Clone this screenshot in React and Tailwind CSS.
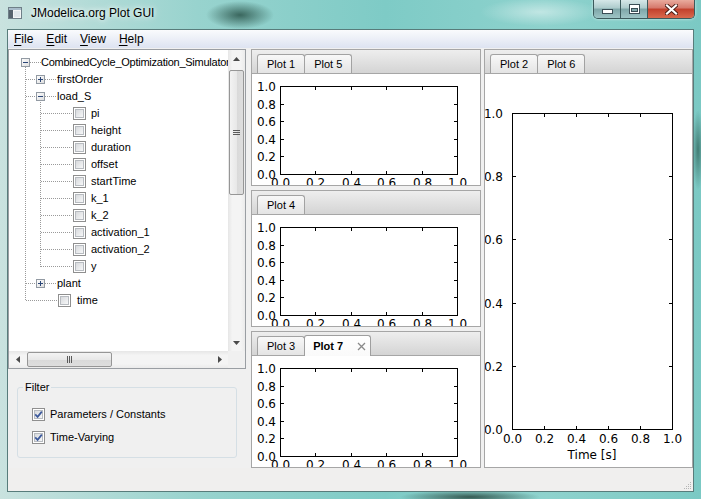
import React from "react";

// ---- Data ----
const treeRows = [
  { label: "CombinedCycle_Optimization_Simulator", kind: "root" },
  { label: "firstOrder", kind: "branch" },
  { label: "load_S", kind: "branch", open: true },
  { label: "pi", kind: "leaf" },
  { label: "height", kind: "leaf" },
  { label: "duration", kind: "leaf" },
  { label: "offset", kind: "leaf" },
  { label: "startTime", kind: "leaf" },
  { label: "k_1", kind: "leaf" },
  { label: "k_2", kind: "leaf" },
  { label: "activation_1", kind: "leaf" },
  { label: "activation_2", kind: "leaf" },
  { label: "y", kind: "leaf" },
  { label: "plant", kind: "branch" },
  { label: "time", kind: "top" },
];

const menus = [
  { key: "F", rest: "ile" },
  { key: "E", rest: "dit" },
  { key: "V", rest: "iew" },
  { key: "H", rest: "elp" },
];

const ticks = [0, 0.2, 0.4, 0.6, 0.8, 1];

// row centre inside the tree viewport
const cy = (i) => 12.5 + 17 * i;

/**
 * Title bar with app icon and caption buttons
 */
function TitleBar() {
  return (
    <div className="flex h-[29px] items-start shrink-0">
      <div className="flex h-[25px] items-center pl-[8px] gap-[9px]">
        <svg width="14" height="12" viewBox="0 0 14 12">
          <rect x="0.5" y="0.5" width="13" height="11" fill="#f2f4f5" stroke="#6f7f88" />
          <rect x="1" y="1" width="12" height="2" fill="#a9bccb" />
          <rect x="1" y="3" width="4" height="8" fill="#56636d" />
          <rect x="6" y="4" width="6" height="6" fill="#dfe6ea" />
        </svg>
        <span className="text-[12px] text-black [text-shadow:0_0_8px_rgba(255,255,255,0.95),0_0_4px_rgba(255,255,255,0.9)]">
          JModelica.org Plot GUI
        </span>
      </div>
      <div className="flex-1" />
      <div className="flex h-[19px] mr-[6px] rounded-b-[5px] border border-t-0 border-[#3c5a5c] overflow-hidden shadow-[0_0_3px_rgba(255,255,255,0.7)]">
        <div className="w-[27px] flex items-center justify-center border-r border-[#3c5a5c] bg-[linear-gradient(#d6e7e8,#adcbcc_45%,#7ea6a8_50%,#9ec4c5)]">
          <svg width="11" height="5" viewBox="0 0 11 5" className="mt-[4px]">
            <rect x="0.5" y="0.5" width="10" height="4" fill="#fff" stroke="#3a4d55" />
          </svg>
        </div>
        <div className="w-[27px] flex items-center justify-center border-r border-[#3c5a5c] bg-[linear-gradient(#d6e7e8,#adcbcc_45%,#7ea6a8_50%,#9ec4c5)]">
          <svg width="11" height="10" viewBox="0 0 11 10">
            <rect x="0.5" y="0.5" width="10" height="9" fill="none" stroke="#3a4d55" />
            <rect x="1.5" y="1.5" width="8" height="7" fill="none" stroke="#fff" />
            <rect x="2" y="2" width="7" height="2" fill="#fff" />
            <rect x="2.5" y="4.5" width="6" height="3" fill="none" stroke="#3a4d55" />
          </svg>
        </div>
        <div className="w-[46px] flex items-center justify-center bg-[linear-gradient(#e9ab9e,#d5776a_45%,#c2402c_50%,#d8694d)]">
          <svg width="13" height="11" viewBox="0 0 13 11">
            <path d="M2 1.5 L11 9.5 M11 1.5 L2 9.5" stroke="#4a1d16" strokeWidth="4" strokeLinecap="square" />
            <path d="M2 1.5 L11 9.5 M11 1.5 L2 9.5" stroke="#fff" strokeWidth="2.2" strokeLinecap="square" />
          </svg>
        </div>
      </div>
    </div>
  );
}

function MenuBar() {
  return (
    <div className="flex h-[18px] items-center pl-[6px] text-[12px] bg-[linear-gradient(#fafbfd,#dde3f1)]">
      {menus.map((m) => (
        <span key={m.key} className="mr-[13px]">
          <span className="underline underline-offset-[2px]">{m.key}</span>
          {m.rest}
        </span>
      ))}
    </div>
  );
}

function CheckBox({ checked }) {
  return (
    <span className="w-[13px] h-[13px] shrink-0 flex border border-[#8f8f8f] bg-white p-[1px]">
      <span className="flex-1 flex items-center justify-center border border-[#b7bbc0] bg-[linear-gradient(135deg,#d8dadd,#f6f7f8)]">
        {checked && (
          <svg width="7" height="7" viewBox="0 0 7 7" className="overflow-visible">
            <path d="M0.2 3.4 L2.6 5.9 L6.8 0.6" fill="none" stroke="#3d5a9c" strokeWidth="1.7" />
          </svg>
        )}
      </span>
    </span>
  );
}

function Arrow({ dir }) {
  const d = {
    up: "M0 4 L3.5 0 L7 4 Z",
    down: "M0 0 L7 0 L3.5 4 Z",
    left: "M4 0 L4 7 L0 3.5 Z",
    right: "M0 0 L4 3.5 L0 7 Z",
  }[dir];
  const vertical = dir === "up" || dir === "down";
  return (
    <svg width={vertical ? 7 : 4} height={vertical ? 4 : 7}>
      <path d={d} fill="#4a4a4a" />
    </svg>
  );
}

function VScroll() {
  return (
    <div className="w-[17px] flex flex-col bg-[linear-gradient(90deg,#e6e6e6,#f4f4f4_25%,#f4f4f4_75%,#ebebeb)]">
      <div className="h-[17px] flex items-center justify-center">
        <Arrow dir="up" />
      </div>
      <div className="flex-1 pt-[3px] px-[1px]">
        <div className="h-[125px] rounded-[2px] border border-[#969696] bg-[linear-gradient(90deg,#f3f3f3,#e8e8e8_50%,#d9d9d9_51%,#dedede)] flex items-center justify-center">
          <svg width="7" height="6">
            <g stroke="#5a5a5a" shapeRendering="crispEdges">
              <line x1="0" y1="0.5" x2="7" y2="0.5" />
              <line x1="0" y1="2.5" x2="7" y2="2.5" />
              <line x1="0" y1="4.5" x2="7" y2="4.5" />
            </g>
          </svg>
        </div>
      </div>
      <div className="h-[17px] flex items-center justify-center">
        <Arrow dir="down" />
      </div>
    </div>
  );
}

function HScroll() {
  return (
    <div className="flex-1 flex bg-[linear-gradient(#e6e6e6,#f4f4f4_25%,#f4f4f4_75%,#ebebeb)]">
      <div className="w-[17px] flex items-center justify-center">
        <Arrow dir="left" />
      </div>
      <div className="flex-1 py-[1px] pl-[1px]">
        <div className="w-[85px] h-full rounded-[2px] border border-[#969696] bg-[linear-gradient(#f3f3f3,#e8e8e8_50%,#d9d9d9_51%,#dedede)] flex items-center justify-center">
          <svg width="6" height="7">
            <g stroke="#5a5a5a" shapeRendering="crispEdges">
              <line x1="0.5" y1="0" x2="0.5" y2="7" />
              <line x1="2.5" y1="0" x2="2.5" y2="7" />
              <line x1="4.5" y1="0" x2="4.5" y2="7" />
            </g>
          </svg>
        </div>
      </div>
      <div className="w-[17px] flex items-center justify-center">
        <Arrow dir="right" />
      </div>
    </div>
  );
}

function Expander({ x, y, open }) {
  return (
    <g shapeRendering="crispEdges">
      <rect x={x + 0.5} y={y + 0.5} width="8" height="8" fill="url(#expFill)" stroke="#929aa3" />
      <line x1={x + 2} y1={y + 4.5} x2={x + 7} y2={y + 4.5} stroke="#2b4677" />
      {!open && <line x1={x + 4.5} y1={y + 2} x2={x + 4.5} y2={y + 7} stroke="#2b4677" />}
    </g>
  );
}

function TreeLines() {
  const leaves = [3, 4, 5, 6, 7, 8, 9, 10, 11, 12];
  return (
    <svg className="absolute left-0 top-0" width="219" height="302">
      <defs>
        <linearGradient id="expFill" x1="0" y1="0" x2="1" y2="1">
          <stop offset="0" stopColor="#ffffff" />
          <stop offset="1" stopColor="#dcdcdc" />
        </linearGradient>
      </defs>
      <g stroke="#9a9a9a" strokeDasharray="1 1" fill="none" shapeRendering="crispEdges">
        <line x1="21" y1={cy(0)} x2="32" y2={cy(0)} />
        <line x1="16.5" y1="17" x2="16.5" y2={cy(14)} />
        {[1, 2, 13].map((i) => (
          <g key={i}>
            <line x1="17" y1={cy(i)} x2="27" y2={cy(i)} />
            <line x1="36" y1={cy(i)} x2="48" y2={cy(i)} />
          </g>
        ))}
        <line x1="17" y1={cy(14)} x2="49" y2={cy(14)} />
        <line x1="31.5" y1={cy(2) + 5} x2="31.5" y2={cy(12)} />
        {leaves.map((i) => (
          <line key={i} x1="32" y1={cy(i)} x2="64" y2={cy(i)} />
        ))}
      </g>
      <Expander x={12} y={cy(0) - 4.5} open />
      <Expander x={27} y={cy(1) - 4.5} />
      <Expander x={27} y={cy(2) - 4.5} open />
      <Expander x={27} y={cy(13) - 4.5} />
    </svg>
  );
}

function TreeRow({ row }) {
  if (row.kind === "root") {
    return (
      <div className="h-[17px] flex items-center pl-[32px] whitespace-nowrap tracking-[-0.25px]">{row.label}</div>
    );
  }
  if (row.kind === "branch") {
    return <div className="h-[17px] flex items-center pl-[48px] whitespace-nowrap">{row.label}</div>;
  }
  if (row.kind === "leaf") {
    return (
      <div className="h-[17px] flex items-center pl-[64px] gap-[5px] whitespace-nowrap">
        <CheckBox />
        {row.label}
      </div>
    );
  }
  return (
    <div className="h-[17px] flex items-center pl-[49px] gap-[6px] whitespace-nowrap">
      <CheckBox />
      {row.label}
    </div>
  );
}

function TreeView() {
  return (
    <div className="h-[320px] shrink-0 flex flex-col border border-[#9a9ea3] bg-white">
      <div className="flex flex-1 min-h-0">
        <div className="relative flex-1 overflow-hidden">
          <TreeLines />
          <div className="relative pt-[4px] text-[11px]">
            {treeRows.map((row) => (
              <TreeRow key={row.label} row={row} />
            ))}
          </div>
        </div>
        <VScroll />
      </div>
      <div className="flex h-[17px] shrink-0">
        <HScroll />
        <div className="w-[17px] bg-[#f0f0f0]" />
      </div>
    </div>
  );
}

function FilterBox() {
  return (
    <fieldset className="mx-[9px] mt-[12px] h-[77px] border border-[#d5dfe5] rounded-[3px] pl-[14px] pt-[12px] text-[11px]">
      <legend className="-ml-[9px] px-[2px] leading-[13px]">Filter</legend>
      <div className="flex flex-col gap-[6px]">
        <label className="h-[17px] flex items-center gap-[5px]">
          <CheckBox checked />
          Parameters / Constants
        </label>
        <label className="h-[17px] flex items-center gap-[5px]">
          <CheckBox checked />
          Time-Varying
        </label>
      </div>
    </fieldset>
  );
}

function Tab({ label, active, closable, first }) {
  if (active) {
    return (
      <div
        className={`relative z-10 h-[21px] -mb-px flex items-center pl-[8px] pr-[4px] border border-b-0 border-[#9f9f9f] rounded-t-[3px] bg-[linear-gradient(#ffffff,#fafafa)] font-bold ${first ? "" : "-ml-px"}`}
      >
        {label}
        {closable && (
          <svg width="9" height="9" viewBox="0 0 9 9" className="ml-[14px]">
            <path d="M1 1 L8 8 M8 1 L1 8" stroke="#8a8a8a" strokeWidth="1.3" />
          </svg>
        )}
      </div>
    );
  }
  return (
    <div
      className={`h-[19px] flex items-center px-[9px] border border-b-0 border-[#a2a2a2] rounded-t-[3px] bg-[linear-gradient(#f8f8f8,#e4e4e4)] ${first ? "" : "-ml-px"}`}
    >
      {label}
    </div>
  );
}

function TabPanel({ tabs, className, children }) {
  return (
    <div className={`flex flex-col ${className}`}>
      <div className="h-[25px] shrink-0 flex items-end pl-[5px] border border-[#a6a6a6] bg-[linear-gradient(#eeeeee,#d4d4d4)] text-[11px]">
        {tabs.map((tab, i) => (
          <Tab key={tab.label} {...tab} first={i === 0} />
        ))}
      </div>
      <div className="flex-1 min-h-0 overflow-hidden border border-t-0 border-[#a6a6a6] bg-white">{children}</div>
    </div>
  );
}

/**
 * Empty matplotlib axes: inward ticks on all four sides
 */
function Plot({ w, h, ax, ay, aw, ah, yRight, xBase, xlabel }) {
  const px = (t) => Math.round(ax + aw * t) + 0.5;
  const py = (t) => Math.round(ay + ah * (1 - t)) + 0.5;
  const inner = ticks.slice(1, -1);
  return (
    <svg width={w} height={h} className="block" fontFamily="'DejaVu Sans', sans-serif" fontSize="12">
      <rect x={ax + 0.5} y={ay + 0.5} width={aw} height={ah} fill="#fff" stroke="#000" shapeRendering="crispEdges" />
      <g stroke="#000" shapeRendering="crispEdges">
        {inner.map((t) => (
          <g key={t}>
            <line x1={px(t)} y1={ay} x2={px(t)} y2={ay + 4} />
            <line x1={px(t)} y1={ay + ah + 1} x2={px(t)} y2={ay + ah - 3} />
            <line x1={ax} y1={py(t)} x2={ax + 4} y2={py(t)} />
            <line x1={ax + aw + 1} y1={py(t)} x2={ax + aw - 3} y2={py(t)} />
          </g>
        ))}
      </g>
      {ticks.map((t) => (
        <text key={"y" + t} x={yRight} y={py(t) + 4.4} textAnchor="end">
          {t.toFixed(1)}
        </text>
      ))}
      {ticks.map((t) => (
        <text key={"x" + t} x={px(t)} y={xBase} textAnchor="middle">
          {t.toFixed(1)}
        </text>
      ))}
      {xlabel && (
        <text x={ax + aw / 2} y={xBase + 15.5} textAnchor="middle">
          {xlabel}
        </text>
      )}
    </svg>
  );
}

function SmallPlot() {
  return <Plot w={228} h={111} ax={28} ay={12} aw={177} ah={88} yRight={24} xBase={113} />;
}

function StatusBar() {
  return (
    <div className="h-[23px] shrink-0 flex items-end justify-end bg-[#f0efee] pr-[1px] pb-[1px]">
      <svg width="9" height="9">
        <g fill="#b5b5b5">
          <rect x="7" y="1" width="1" height="1" />
          <rect x="5" y="3" width="1" height="1" />
          <rect x="7" y="3" width="1" height="1" />
          <rect x="3" y="5" width="1" height="1" />
          <rect x="5" y="5" width="1" height="1" />
          <rect x="7" y="5" width="1" height="1" />
          <rect x="1" y="7" width="1" height="1" />
          <rect x="3" y="7" width="1" height="1" />
          <rect x="5" y="7" width="1" height="1" />
          <rect x="7" y="7" width="1" height="1" />
        </g>
      </svg>
    </div>
  );
}

export default function App() {
  return (
    <div className="w-[701px] h-[499px] overflow-hidden flex flex-col text-black [font-family:'Liberation_Sans',Arial,sans-serif] [background-image:radial-gradient(34px_14px_at_240px_15px,rgba(36,76,66,0.8),transparent),radial-gradient(70px_7px_at_470px_497px,rgba(40,70,62,0.85),transparent),radial-gradient(6px_40px_at_698px_150px,rgba(40,90,80,0.7),transparent),radial-gradient(60px_14px_at_540px_12px,rgba(255,255,255,0.45),transparent),linear-gradient(90deg,#c9e2df,#98d3ce_28%,#7ecbc6_55%,#8ed2cd_78%,#7bc9c4)]">
      <TitleBar />

      <div className="mx-[7px] flex-1 flex flex-col border border-[#587c7b] bg-[#f0f0f0]">
        <MenuBar />

        <div className="flex h-[420px] pt-[1px]">
          {/* Variable tree + filter */}
          <div className="w-[238px] flex flex-col">
            <TreeView />
            <FilterBox />
          </div>

          <div className="w-[5px]" />

          {/* Middle plot column */}
          <div className="w-[230px] flex flex-col gap-[4px]">
            <TabPanel className="h-[137px]" tabs={[{ label: "Plot 1" }, { label: "Plot 5" }]}>
              <SmallPlot />
            </TabPanel>
            <TabPanel className="h-[137px]" tabs={[{ label: "Plot 4" }]}>
              <SmallPlot />
            </TabPanel>
            <TabPanel className="h-[137px]" tabs={[{ label: "Plot 3" }, { label: "Plot 7", active: true, closable: true }]}>
              <SmallPlot />
            </TabPanel>
          </div>

          <div className="w-[3px]" />

          {/* Right plot column */}
          <div className="flex-1 flex flex-col">
            <TabPanel className="h-full" tabs={[{ label: "Plot 2" }, { label: "Plot 6" }]}>
              <Plot w={207} h={393} ax={27} ay={39} aw={160} ah={316} yRight={18} xBase={369} xlabel="Time [s]" />
            </TabPanel>
          </div>
        </div>

        <StatusBar />
      </div>

      <div className="h-[7px] shrink-0" />
    </div>
  );
}
